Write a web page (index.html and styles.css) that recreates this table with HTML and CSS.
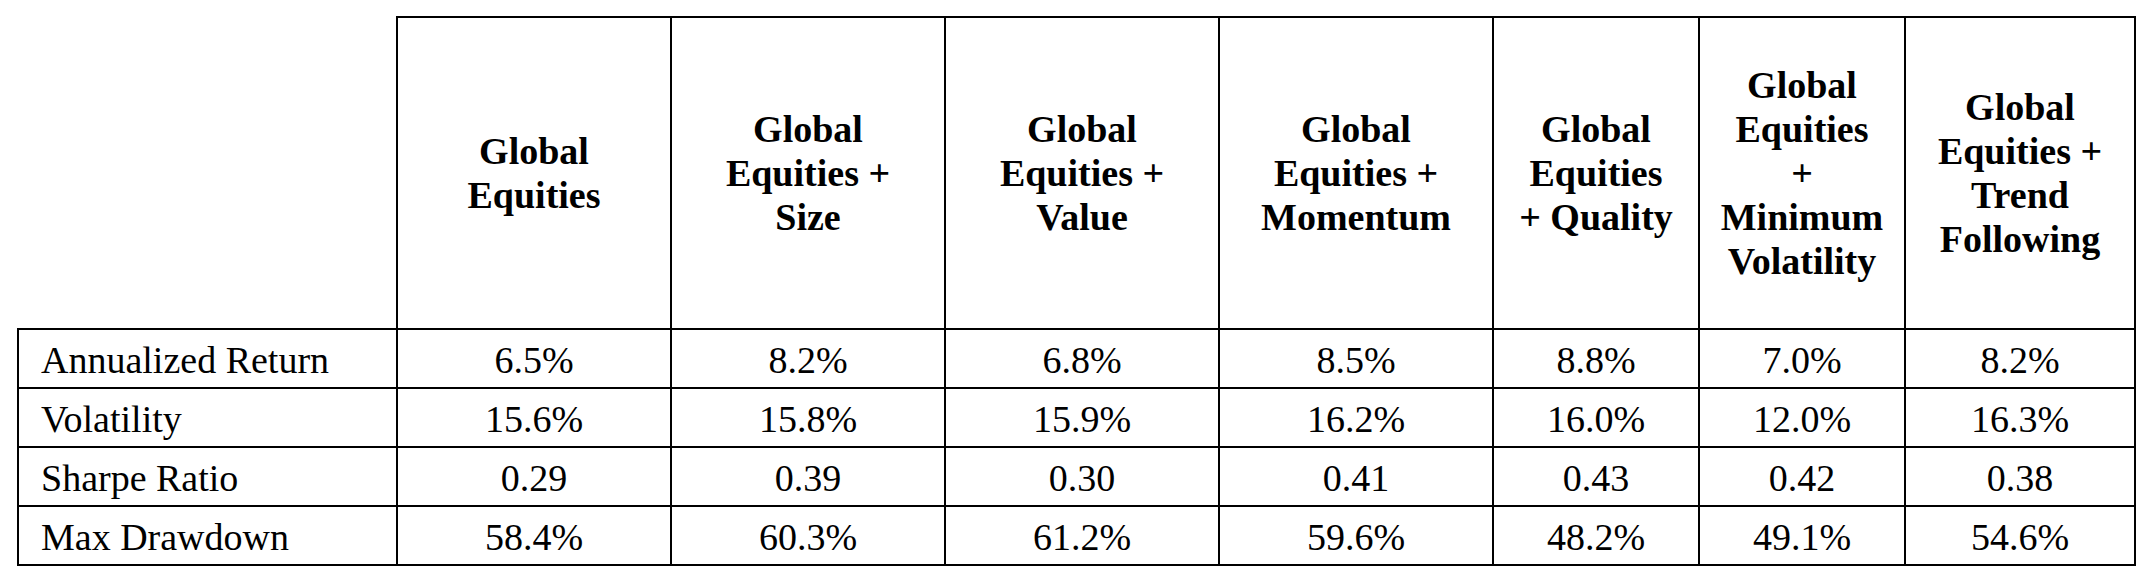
FILE: index.html
```html
<!DOCTYPE html>
<html lang="en">
<head>
<meta charset="utf-8">
<title>Factor performance table</title>
<link rel="stylesheet" href="styles.css">
</head>
<body>
<main class="page">
  <table class="stats">
    <colgroup>
      <col class="c-label">
      <col class="c-wide">
      <col class="c-wide">
      <col class="c-wide">
      <col class="c-wide">
      <col class="c-narrow">
      <col class="c-narrow">
      <col class="c-last">
    </colgroup>
    <thead>
      <tr class="head-row">
        <th class="corner"></th>
        <th>Global<br>Equities</th>
        <th>Global<br>Equities +<br>Size</th>
        <th>Global<br>Equities +<br>Value</th>
        <th>Global<br>Equities +<br>Momentum</th>
        <th>Global<br>Equities<br>+ Quality</th>
        <th>Global<br>Equities<br>+<br>Minimum<br>Volatility</th>
        <th>Global<br>Equities +<br>Trend<br>Following</th>
      </tr>
    </thead>
    <tbody>
      <tr>
        <td class="label">Annualized Return</td>
        <td>6.5%</td><td>8.2%</td><td>6.8%</td><td>8.5%</td><td>8.8%</td><td>7.0%</td><td>8.2%</td>
      </tr>
      <tr>
        <td class="label">Volatility</td>
        <td>15.6%</td><td>15.8%</td><td>15.9%</td><td>16.2%</td><td>16.0%</td><td>12.0%</td><td>16.3%</td>
      </tr>
      <tr>
        <td class="label">Sharpe Ratio</td>
        <td>0.29</td><td>0.39</td><td>0.30</td><td>0.41</td><td>0.43</td><td>0.42</td><td>0.38</td>
      </tr>
      <tr>
        <td class="label">Max Drawdown</td>
        <td>58.4%</td><td>60.3%</td><td>61.2%</td><td>59.6%</td><td>48.2%</td><td>49.1%</td><td>54.6%</td>
      </tr>
    </tbody>
  </table>
</main>
</body>
</html>
```

FILE: styles.css
```css
html, body {
  margin: 0;
  padding: 0;
  background: #ffffff;
  font-family: "Liberation Serif", "Times New Roman", serif;
}

.page {
  padding: 16px 0 0 17px;
  color: #000000;
}

.stats {
  border-collapse: collapse;
  table-layout: fixed;
  width: 2119px;
  font-family: "Liberation Serif", "Times New Roman", serif;
  font-size: 38px;
}

.c-label { width: 379px; }
.c-wide { width: 274px; }
.c-narrow { width: 206px; }
.c-last { width: 230px; }

.stats th,
.stats td {
  border: 2px solid #000000;
  padding: 0;
  text-align: center;
  vertical-align: middle;
}

.stats th {
  font-weight: bold;
  font-size: 38px;
  line-height: 44px;
}

.head-row {
  height: 312px;
}

.stats th.corner {
  border-top: none;
  border-left: none;
}

.stats tbody tr {
  height: 59px;
}

.stats td {
  line-height: 40px;
  padding-top: 3px;
}

.stats td.label {
  text-align: left;
  padding-left: 22px;
}
```
